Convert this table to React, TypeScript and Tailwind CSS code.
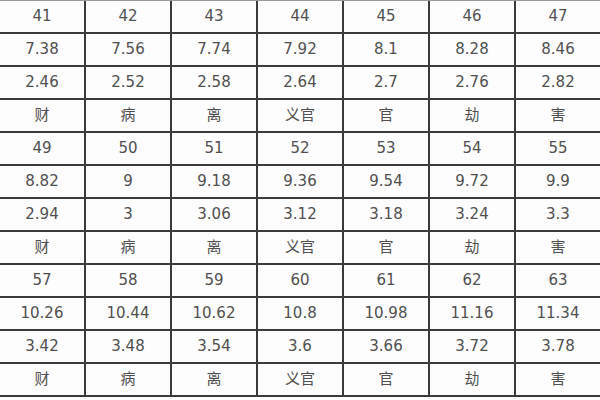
const labels = ['财', '病', '离', '义官', '官', '劫', '害']

// three blocks of four rows: number, ratio, half ratio, label
const blocks = [
  {
    nums: ['41', '42', '43', '44', '45', '46', '47'],
    a: ['7.38', '7.56', '7.74', '7.92', '8.1', '8.28', '8.46'],
    b: ['2.46', '2.52', '2.58', '2.64', '2.7', '2.76', '2.82'],
  },
  {
    nums: ['49', '50', '51', '52', '53', '54', '55'],
    a: ['8.82', '9', '9.18', '9.36', '9.54', '9.72', '9.9'],
    b: ['2.94', '3', '3.06', '3.12', '3.18', '3.24', '3.3'],
  },
  {
    nums: ['57', '58', '59', '60', '61', '62', '63'],
    a: ['10.26', '10.44', '10.62', '10.8', '10.98', '11.16', '11.34'],
    b: ['3.42', '3.48', '3.54', '3.6', '3.66', '3.72', '3.78'],
  },
]

export default function App() {
  const rows: string[][] = []
  blocks.forEach((blk) => {
    rows.push(blk.nums, blk.a, blk.b, labels)
  })

  return (
    <div className="w-[600px] h-[400px] overflow-hidden bg-[#fdfdfd] border-t border-[#9a9a9a]">
      <div className="grid grid-cols-[repeat(7,86px)] text-[15px] text-[#505050] [font-family:'DejaVu_Sans','Noto_Sans_CJK_SC',sans-serif]">
        {rows.map((row, i) =>
          row.map((cell, j) => (
            <div
              key={`${i}-${j}`}
              className="h-[33px] flex items-center justify-center border-r-2 border-b-2 border-[#3a3a3a] leading-none"
            >
              {cell}
            </div>
          ))
        )}
      </div>
    </div>
  )
}
